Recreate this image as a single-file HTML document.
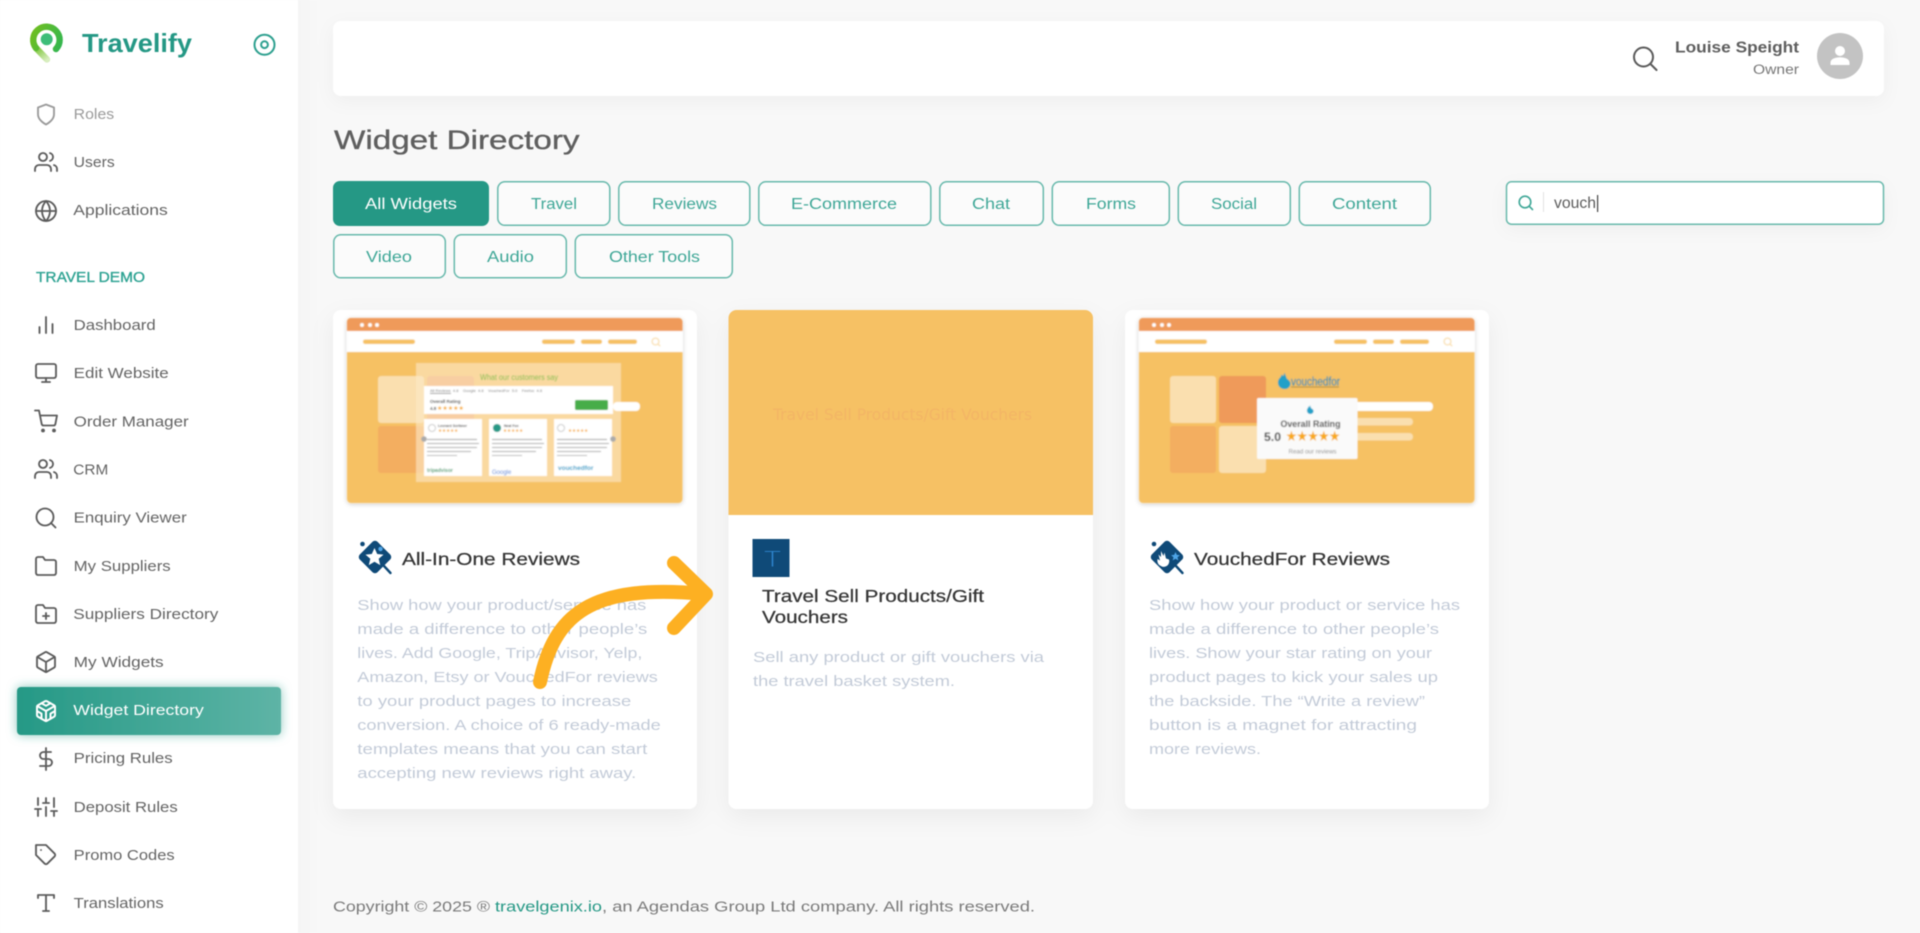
<!DOCTYPE html>
<html lang="en"><head><meta charset="utf-8"><title>Widget Directory</title>
<style>
html,body{margin:0;padding:0;width:1920px;height:933px;overflow:hidden;background:#f8f8f8}
svg{display:block;filter:blur(.45px)}
text{font-family:"Liberation Sans",sans-serif;white-space:pre}
.n{font-size:15px;fill:#646464}
.f{font-size:15.5px;fill:#3fa797;text-anchor:start}
.d{font-size:15px;fill:#c3cbd8}
.h{font-size:17.5px;fill:#353535;stroke:#353535;stroke-width:.25}
.i{fill:none;stroke:#5c5c5c;stroke-width:1.85;stroke-linecap:round;stroke-linejoin:round}
.b{fill:#fbfbfb;stroke:#68b9ac;stroke-width:1.5}
.t{fill:#8a8a8a}
</style></head><body>
<svg width="1920" height="933" viewBox="0 0 1920 933" xmlns="http://www.w3.org/2000/svg">
<defs>
<filter id="card" x="-20%" y="-20%" width="140%" height="140%"><feDropShadow dx="0" dy="8" stdDeviation="12" flood-color="#000" flood-opacity=".055"/></filter>
<filter id="top" x="-5%" y="-50%" width="110%" height="200%"><feDropShadow dx="0" dy="5" stdDeviation="9" flood-color="#000" flood-opacity=".04"/></filter>
<filter id="act" x="-15%" y="-50%" width="130%" height="200%"><feDropShadow dx="0" dy="0" stdDeviation="5" flood-color="#259885" flood-opacity=".55"/></filter>
<filter id="fr" x="-5%" y="-5%" width="110%" height="110%"><feDropShadow dx="0" dy="1" stdDeviation="2.5" flood-color="#000" flood-opacity=".22"/></filter>
<filter id="soft" x="-5%" y="-5%" width="110%" height="110%"><feGaussianBlur stdDeviation=".45"/></filter>
<linearGradient id="ag" x1="0" x2="1" y1="0" y2="0"><stop offset="0" stop-color="#259986"/><stop offset="1" stop-color="#5eb4a6"/></linearGradient>
<linearGradient id="lg" x1="31" x2="62" y1="30" y2="45" gradientUnits="userSpaceOnUse"><stop offset="0" stop-color="#72bf1f"/><stop offset="1" stop-color="#33b64f"/></linearGradient>
<linearGradient id="lt" x1="36" x2="47" y1="46" y2="60" gradientUnits="userSpaceOnUse"><stop offset="0" stop-color="#72c02a"/><stop offset="1" stop-color="#d8eebf"/></linearGradient>
<linearGradient id="sb" x1="0" x2="1" y1="0" y2="0"><stop offset="0" stop-color="#000" stop-opacity=".012"/><stop offset="1" stop-color="#000" stop-opacity="0"/></linearGradient>
<g id="frame">
<g filter="url(#fr)"><rect x="347" y="318" width="335.5" height="185" rx="4" fill="#f6c164"/></g>
<path d="M347 331v-9a4 4 0 0 1 4-4h327.5a4 4 0 0 1 4 4v9z" fill="#ef9a5a"/>
<rect x="347" y="331" width="335.5" height="21" fill="#fff"/>
<circle cx="362" cy="325" r="2" fill="#fff"/><circle cx="370" cy="325" r="2" fill="#fff"/><circle cx="377" cy="325" r="2" fill="#fff"/>
<rect x="363" y="339.5" width="52" height="4.5" rx="2.2" fill="#f6c164"/>
<rect x="542" y="339.5" width="33" height="4.5" rx="2.2" fill="#f6c164"/>
<rect x="581" y="339.5" width="21" height="4.5" rx="2.2" fill="#f6c164"/>
<rect x="608" y="339.5" width="29" height="4.5" rx="2.2" fill="#f6c164"/>
<circle cx="655.5" cy="341.5" r="3.4" fill="none" stroke="#fadfae" stroke-width="1.3"/><path d="M658 344l2.2 2.2" stroke="#fadfae" stroke-width="1.3"/>
</g>
<g id="bd"><rect width="58" height="57" fill="#fff"/>
<rect x="3" y="20" width="50" height="1" fill="#9a9a9a"/><rect x="3" y="24" width="52" height="1" fill="#a5a5a5"/><rect x="3" y="28" width="50" height="1" fill="#a5a5a5"/><rect x="3" y="32" width="44" height="1" fill="#a5a5a5"/><rect x="3" y="36" width="30" height="1" fill="#b5b5b5"/></g>
</defs>

<rect width="1920" height="933" fill="#f8f8f8"/>
<rect x="298" y="0" width="24" height="933" fill="url(#sb)"/>
<rect x="0" y="0" width="298" height="933" fill="#fff"/>

<!-- logo -->
<path d="M36 48L47 59.5" fill="none" stroke="url(#lt)" stroke-width="6.4" stroke-linecap="round"/>
<path d="M56 49A13.2 13.2 0 1 0 36 48" fill="none" stroke="url(#lg)" stroke-width="6.4" stroke-linecap="round"/>
<circle cx="46.7" cy="39.3" r="6" fill="#3dbd78"/>
<text x="82" y="52" font-size="26" font-weight="700" fill="#259885" textLength="110" lengthAdjust="spacingAndGlyphs">Travelify</text>
<circle cx="264.5" cy="44.7" r="10" fill="none" stroke="#2ea08f" stroke-width="2"/><circle cx="264.5" cy="44.7" r="3.4" fill="none" stroke="#2ea08f" stroke-width="2"/>

<!-- sidebar nav text -->
<text class="n" x="73.7" y="119" style="fill:#9a9a9a" textLength="40.5" lengthAdjust="spacingAndGlyphs">Roles</text>
<text class="n" x="73.7" y="167" textLength="41" lengthAdjust="spacingAndGlyphs">Users</text>
<text class="n" x="73.3" y="215" textLength="94.5" lengthAdjust="spacingAndGlyphs">Applications</text>
<text x="36" y="282" font-size="15" fill="#2fa393" stroke="#2fa393" stroke-width=".35" textLength="109" lengthAdjust="spacingAndGlyphs">TRAVEL DEMO</text>
<text class="n" x="73.7" y="330" textLength="82" lengthAdjust="spacingAndGlyphs">Dashboard</text>
<text class="n" x="73.7" y="378" textLength="95" lengthAdjust="spacingAndGlyphs">Edit Website</text>
<text class="n" x="73.7" y="426.5" textLength="115" lengthAdjust="spacingAndGlyphs">Order Manager</text>
<text class="n" x="73.3" y="474.5" textLength="35" lengthAdjust="spacingAndGlyphs">CRM</text>
<text class="n" x="73.7" y="522.5" textLength="113" lengthAdjust="spacingAndGlyphs">Enquiry Viewer</text>
<text class="n" x="73.7" y="571" textLength="97" lengthAdjust="spacingAndGlyphs">My Suppliers</text>
<text class="n" x="73.3" y="619" textLength="145" lengthAdjust="spacingAndGlyphs">Suppliers Directory</text>
<text class="n" x="73.7" y="667" textLength="90" lengthAdjust="spacingAndGlyphs">My Widgets</text>
<g filter="url(#act)"><rect x="17" y="687" width="264" height="48" rx="4" fill="url(#ag)"/></g>
<text class="n" x="73.3" y="715" style="fill:#fff" textLength="130.5" lengthAdjust="spacingAndGlyphs">Widget Directory</text>
<text class="n" x="73.7" y="763" textLength="99" lengthAdjust="spacingAndGlyphs">Pricing Rules</text>
<text class="n" x="73.7" y="812" textLength="104" lengthAdjust="spacingAndGlyphs">Deposit Rules</text>
<text class="n" x="73.7" y="860" textLength="101" lengthAdjust="spacingAndGlyphs">Promo Codes</text>
<text class="n" x="73.7" y="908" textLength="90" lengthAdjust="spacingAndGlyphs">Translations</text>

<!-- sidebar icons -->
<g class="i" transform="translate(34 102.500)" style="stroke:#9a9a9a"><path d="M12 22s8-4 8-10V5l-8-3-8 3v7c0 6 8 10 8 10z"/></g>
<g class="i" transform="translate(34 150)"><path d="M17 21v-2a4 4 0 0 0-4-4H5a4 4 0 0 0-4 4v2"/><circle cx="9" cy="7" r="4"/><path d="M23 21v-2a4 4 0 0 0-3-3.87"/><path d="M16 3.130a4 4 0 0 1 0 7.750"/></g>
<g class="i" transform="translate(34 199)"><circle cx="12" cy="12" r="10"/><path d="M2 12h20"/><path d="M12 2a15.3 15.3 0 0 1 4 10 15.3 15.3 0 0 1-4 10 15.3 15.3 0 0 1-4-10 15.3 15.3 0 0 1 4-10z"/></g>
<g class="i" transform="translate(34 313)"><path d="M18.500 20V11M12 20V4M5.500 20v-6"/></g>
<g class="i" transform="translate(34 361)"><rect x="2" y="3" width="20" height="14" rx="2"/><path d="M8 21h8M12 17v4"/></g>
<g class="i" transform="translate(34 409.500)"><circle cx="9" cy="21" r="1"/><circle cx="20" cy="21" r="1"/><path d="M1 1h4l2.68 13.39a2 2 0 0 0 2 1.61h9.72a2 2 0 0 0 2-1.61L23 6H6"/></g>
<g class="i" transform="translate(34 457)"><path d="M17 21v-2a4 4 0 0 0-4-4H5a4 4 0 0 0-4 4v2"/><circle cx="9" cy="7" r="4"/><path d="M23 21v-2a4 4 0 0 0-3-3.87"/><path d="M16 3.130a4 4 0 0 1 0 7.750"/></g>
<g class="i" transform="translate(34 506)"><circle cx="11" cy="11" r="8.500"/><path d="M21.500 21.500l-4.600-4.600"/></g>
<g class="i" transform="translate(34 554)"><path d="M22 19a2 2 0 0 1-2 2H4a2 2 0 0 1-2-2V5a2 2 0 0 1 2-2h5l2 3h9a2 2 0 0 1 2 2z"/></g>
<g class="i" transform="translate(34 602)"><path d="M22 19a2 2 0 0 1-2 2H4a2 2 0 0 1-2-2V5a2 2 0 0 1 2-2h5l2 3h9a2 2 0 0 1 2 2z"/><path d="M12 11v6M9 14h6"/></g>
<g class="i" transform="translate(34 650)"><path d="M21 16V8a2 2 0 0 0-1-1.730l-7-4a2 2 0 0 0-2 0l-7 4A2 2 0 0 0 3 8v8a2 2 0 0 0 1 1.730l7 4a2 2 0 0 0 2 0l7-4A2 2 0 0 0 21 16z"/><path d="M3.270 6.960L12 12.010l8.730-5.050M12 22.080V12"/></g>
<g class="i" transform="translate(34 699)" style="stroke:#fff;stroke-width:2"><path d="M21 16V8a2 2 0 0 0-1-1.730l-7-4a2 2 0 0 0-2 0l-7 4A2 2 0 0 0 3 8v8a2 2 0 0 0 1 1.730l7 4a2 2 0 0 0 2 0l7-4A2 2 0 0 0 21 16z"/><path d="M7.500 4.210l4.500 2.600 4.500-2.600M7.500 19.790V14.600L3 12M21 12l-4.500 2.600v5.190M3.270 6.960L12 12.010l8.730-5.050M12 22.080V12"/></g>
<g class="i" transform="translate(34 747)"><path d="M12 1v22"/><path d="M17 5H9.500a3.500 3.500 0 0 0 0 7h5a3.500 3.500 0 0 1 0 7H6"/></g>
<g class="i" transform="translate(34 795)"><path d="M4 21v-7M4 10V3M12 21v-9M12 8V3M20 21v-5M20 12V3M1 14h6M9 8h6M17 16h6"/></g>
<g class="i" transform="translate(34 843)"><path d="M20.590 13.410l-7.170 7.170a2 2 0 0 1-2.830 0L2 12V2h10l8.590 8.590a2 2 0 0 1 0 2.820z"/><path d="M7 7h.01"/></g>
<g class="i" transform="translate(34 891)"><path d="M4 7V4h16v3M9 20h6M12 4v16"/></g>

<!-- header -->
<g filter="url(#top)"><rect x="333" y="21" width="1551" height="75" rx="8" fill="#fff"/></g>
<g class="i" transform="translate(1632.500 46)" style="stroke:#5a5a5a;stroke-width:2"><circle cx="11" cy="11" r="9.500"/><path d="M24 24l-6-6"/></g>
<text x="1675" y="52.500" font-size="16" font-weight="700" fill="#5e5e5e" textLength="124" lengthAdjust="spacingAndGlyphs">Louise Speight</text>
<text x="1753" y="74" font-size="13.500" fill="#777" textLength="46" lengthAdjust="spacingAndGlyphs">Owner</text>
<circle cx="1840" cy="56" r="23" fill="#c3c3c3"/>
<circle cx="1840" cy="51" r="5" fill="#fff"/><path d="M1830.500 65v-2.500c0-3.500 5-5.200 9.500-5.200s9.500 1.700 9.500 5.200v2.500z" fill="#fff"/>

<!-- title -->
<text x="334" y="149" font-size="27" fill="#5f5f5f" stroke="#5f5f5f" stroke-width=".35" textLength="245.500" lengthAdjust="spacingAndGlyphs">Widget Directory</text>

<!-- filters -->
<rect x="333" y="181" width="156" height="45" rx="7" fill="#259885"/>
<rect class="b" x="497.800" y="181.800" width="112" height="43.500" rx="7"/>
<rect class="b" x="618.800" y="181.800" width="131" height="43.500" rx="7"/>
<rect class="b" x="758.800" y="181.800" width="172" height="43.500" rx="7"/>
<rect class="b" x="939.800" y="181.800" width="103.500" height="43.500" rx="7"/>
<rect class="b" x="1052.300" y="181.800" width="117" height="43.500" rx="7"/>
<rect class="b" x="1178.300" y="181.800" width="112" height="43.500" rx="7"/>
<rect class="b" x="1299.300" y="181.800" width="131" height="43.500" rx="7"/>
<rect class="b" x="333.800" y="234.800" width="111.500" height="43" rx="7"/>
<rect class="b" x="454.300" y="234.800" width="112" height="43" rx="7"/>
<rect class="b" x="575.300" y="234.800" width="157" height="43" rx="7"/>
<text class="f" x="365" y="209" style="fill:#fff" textLength="92" lengthAdjust="spacingAndGlyphs">All Widgets</text>
<text class="f" x="531" y="209" textLength="46" lengthAdjust="spacingAndGlyphs">Travel</text>
<text class="f" x="652" y="209" textLength="65" lengthAdjust="spacingAndGlyphs">Reviews</text>
<text class="f" x="791" y="209" textLength="106" lengthAdjust="spacingAndGlyphs">E-Commerce</text>
<text class="f" x="972" y="209" textLength="38" lengthAdjust="spacingAndGlyphs">Chat</text>
<text class="f" x="1086" y="209" textLength="50" lengthAdjust="spacingAndGlyphs">Forms</text>
<text class="f" x="1211" y="209" textLength="46" lengthAdjust="spacingAndGlyphs">Social</text>
<text class="f" x="1332" y="209" textLength="65" lengthAdjust="spacingAndGlyphs">Content</text>
<text class="f" x="366" y="262" textLength="46" lengthAdjust="spacingAndGlyphs">Video</text>
<text class="f" x="487" y="262" textLength="47" lengthAdjust="spacingAndGlyphs">Audio</text>
<text class="f" x="609" y="262" textLength="91" lengthAdjust="spacingAndGlyphs">Other Tools</text>

<!-- search box -->
<g filter="url(#top)"><rect x="1506" y="182" width="378" height="42" rx="5" fill="#fff"/></g>
<rect x="1506.500" y="181.800" width="377" height="42.400" rx="5" fill="#fff" stroke="#69b9ac" stroke-width="1.500"/>
<circle cx="1525" cy="202" r="5.800" fill="none" stroke="#3fa797" stroke-width="1.600"/><path d="M1529.200 206.200l3.300 3.300" stroke="#3fa797" stroke-width="1.600" stroke-linecap="round"/>
<rect x="1543" y="192" width="1" height="20" fill="#e2e2e2"/>
<text x="1554" y="208" font-size="16" fill="#5c5c5c" textLength="42" lengthAdjust="spacingAndGlyphs">vouch</text>
<rect x="1597" y="195" width="1.200" height="17" fill="#444"/>

<!-- cards -->
<g filter="url(#card)"><rect x="333" y="310" width="364" height="499" rx="8" fill="#fff"/>
<rect x="728.500" y="310" width="364.500" height="499" rx="8" fill="#fff"/>
<rect x="1125" y="310" width="364" height="499" rx="8" fill="#fff"/></g>

<!-- card 1 mock -->
<g filter="url(#soft)">
<use href="#frame"/>
<rect x="378" y="376" width="46" height="47" rx="3" fill="#fadfaf"/>
<rect x="378" y="426" width="46" height="47" rx="3" fill="#f3ae60"/>
<rect x="427" y="376" width="47" height="47" rx="3" fill="#f2a367"/>
<rect x="416" y="363" width="205" height="119" fill="#fce9c6" fill-opacity=".62"/>
<text x="480" y="380" font-size="8" fill="#7cbd48" textLength="78" lengthAdjust="spacingAndGlyphs">What our customers say</text>
<rect x="424" y="386" width="189" height="28" fill="#fff"/>
<rect x="613" y="402" width="27" height="9" rx="4" fill="#fff"/>
<text x="430" y="392" font-size="4" fill="#777">All Reviews  4.8    Google  4.8    VouchedFor  5.0    Feefoo  4.8</text>
<rect x="430" y="393" width="21" height=".8" fill="#777"/>
<text x="430" y="403" font-size="4.500" font-weight="700" fill="#444">Overall Rating</text>
<text x="430" y="410" font-size="4.500" font-weight="700" fill="#444">4.8</text>
<text x="437" y="410" font-size="6" fill="#f8a81e" style="font-family:'DejaVu Sans',sans-serif">★★★★★</text>
<rect x="575" y="400" width="33" height="10" rx="1.500" fill="#47ad4a"/>
<use href="#bd" x="424" y="419"/>
<use href="#bd" x="489" y="419"/>
<use href="#bd" x="554" y="419"/>
<circle cx="432" cy="428" r="3.500" fill="none" stroke="#ccc"/><circle cx="497" cy="428" r="4" fill="#259885"/><circle cx="561" cy="428" r="3.500" fill="none" stroke="#ccc"/>
<text x="438" y="427" font-size="3.500" font-weight="700" fill="#555">Leonard Scribner</text><text x="504" y="427" font-size="3.500" font-weight="700" fill="#555">Neal Fox</text>
<text x="438" y="432" font-size="4.500" fill="#f8a81e" style="font-family:'DejaVu Sans',sans-serif">★★★★★</text><text x="503" y="432" font-size="4.500" fill="#f8a81e" style="font-family:'DejaVu Sans',sans-serif">★★★★★</text><text x="568" y="432" font-size="4.500" fill="#f8a81e" style="font-family:'DejaVu Sans',sans-serif">★★★★★</text>
<text x="427" y="472" font-size="5" fill="#4a9e70" font-weight="700">tripadvisor</text>
<text x="492" y="474" font-size="6" fill="#4b7fd8">Google</text>
<text x="558" y="470" font-size="6.500" fill="#2a9fc9" font-weight="700">vouchedfor</text>
<circle cx="424" cy="439" r="2.800" fill="#aaa"/><circle cx="613" cy="439" r="2.800" fill="#aaa"/>
</g>
<!-- card 2 image -->
<path d="M728.500 515V318a8 8 0 0 1 8-8H1085a8 8 0 0 1 8 8v197z" fill="#f6c164"/>
<text x="773" y="420" font-size="16" fill="#f3b565" style="font-family:'DejaVu Sans',sans-serif" textLength="259" lengthAdjust="spacingAndGlyphs">Travel Sell Products/Gift Vouchers</text>

<!-- card 3 mock -->
<g filter="url(#soft)">
<use href="#frame" x="792"/>
<rect x="1170" y="376" width="46" height="47" rx="3" fill="#fadfaf"/>
<rect x="1219" y="376" width="47" height="47" rx="3" fill="#ef9a5a"/>
<rect x="1170" y="426" width="46" height="47" rx="3" fill="#f3ae60"/>
<rect x="1219" y="426" width="47" height="47" rx="3" fill="#fadfaf"/>
<rect x="1340" y="402" width="93" height="9" rx="4" fill="#fff"/>
<rect x="1340" y="418" width="73" height="7.500" rx="3.500" fill="#fadfaf"/>
<rect x="1340" y="433" width="73" height="7.500" rx="3.500" fill="#fadfaf"/>
<path d="M1285 389c-4.500 0-7-3-7-6.500 0-4.500 3.500-4.500 3.500-8 1 1 2 1.500 2 1.500 0-1 1-2.500 1-3.500 1 2.500 1.500 4.500 2.500 6.500 2 1 3.500 3 3.500 4.500 0 3-2.500 5.500-5.500 5.500z" fill="#22a0c8"/>
<text x="1291" y="385.500" font-size="11.500" fill="#2a8fb5" stroke="#2a8fb5" stroke-width=".2" textLength="49" lengthAdjust="spacingAndGlyphs">vouchedfor</text>
<rect x="1291" y="386.500" width="48" height="1" fill="#7d6a30" opacity=".6"/>
<rect x="1257" y="398" width="100.500" height="61" rx="1.500" fill="#fafafa"/>
<path d="M1310.500 414c-2 0-3.500-1.500-3.500-3.500 0-2 1.500-2.200 1.500-4.200l1 .8.500-2 1 3.200c1.500.8 2.500 1.500 2.500 2.700 0 1.800-1.500 3-3 3z" fill="#22a0c8"/>
<text x="1280.500" y="427" font-size="9" font-weight="700" fill="#444" textLength="60" lengthAdjust="spacingAndGlyphs">Overall Rating</text>
<text x="1264" y="441" font-size="11.500" font-weight="700" fill="#444" textLength="17" lengthAdjust="spacingAndGlyphs">5.0</text>
<text x="1286" y="440.500" font-size="13" fill="#f8a81e" stroke="#f8a81e" stroke-width=".3" style="font-family:'DejaVu Sans',sans-serif" textLength="54" lengthAdjust="spacingAndGlyphs">★★★★★</text>
<text x="1288.500" y="453.500" font-size="6.500" fill="#8d8d8d" textLength="48" lengthAdjust="spacingAndGlyphs">Read our reviews</text>
</g>

<!-- card 1 content -->
<g>
<rect x="362.500" y="544.500" width="25" height="25" rx="3.500" transform="rotate(45 375 557)" fill="#0f4a78"/>
<circle cx="362.500" cy="544" r="2.300" fill="#0f4a78"/>
<path d="M384 566l6.500 7" stroke="#0f4a78" stroke-width="2.400" stroke-linecap="round"/>
<path d="M374.500 548l2.700 6 6.300.6-4.800 4.200 1.500 6.300-5.700-3.400-5.700 3.400 1.500-6.300-4.800-4.200 6.300-.6z" fill="#fff"/>
<circle cx="380.500" cy="549" r="2.200" fill="#4fa6e8"/>
</g>
<text class="h" x="402" y="565" textLength="178" lengthAdjust="spacingAndGlyphs">All-In-One Reviews</text>
<text class="d" x="357.300" y="610" textLength="289" lengthAdjust="spacingAndGlyphs">Show how your product/service has</text>
<text class="d" x="357.300" y="634" textLength="290" lengthAdjust="spacingAndGlyphs">made a difference to other people’s</text>
<text class="d" x="357.300" y="658" textLength="285" lengthAdjust="spacingAndGlyphs">lives. Add Google, TripAdvisor, Yelp,</text>
<text class="d" x="357.300" y="682" textLength="300.500" lengthAdjust="spacingAndGlyphs">Amazon, Etsy or VouchedFor reviews</text>
<text class="d" x="357.300" y="706" textLength="274" lengthAdjust="spacingAndGlyphs">to your product pages to increase</text>
<text class="d" x="357.300" y="730" textLength="303.500" lengthAdjust="spacingAndGlyphs">conversion. A choice of 6 ready-made</text>
<text class="d" x="357.300" y="754" textLength="290" lengthAdjust="spacingAndGlyphs">templates means that you can start</text>
<text class="d" x="357.300" y="778" textLength="279" lengthAdjust="spacingAndGlyphs">accepting new reviews right away.</text>

<!-- card 2 content -->
<rect x="752.500" y="539" width="37" height="38" fill="#0f4a78"/>
<text x="763.500" y="567" font-size="24" fill="#2f86cf" stroke="#0f4a78" stroke-width="1" textLength="18" lengthAdjust="spacingAndGlyphs">T</text>
<text class="h" x="762" y="602" textLength="222" lengthAdjust="spacingAndGlyphs">Travel Sell Products/Gift</text>
<text class="h" x="762" y="623" textLength="86" lengthAdjust="spacingAndGlyphs">Vouchers</text>
<text class="d" x="753" y="662" textLength="291" lengthAdjust="spacingAndGlyphs">Sell any product or gift vouchers via</text>
<text class="d" x="753" y="686" textLength="202" lengthAdjust="spacingAndGlyphs">the travel basket system.</text>

<!-- card 3 content -->
<g>
<rect x="1154.500" y="544.500" width="25" height="25" rx="3.500" transform="rotate(45 1167 557)" fill="#0f4a78"/>
<circle cx="1154" cy="544" r="2.300" fill="#0f4a78"/>
<path d="M1176 566l6.500 7" stroke="#0f4a78" stroke-width="2.400" stroke-linecap="round"/>
<path d="M1161 566c-3-1-4-4-3.500-7l2.500 1.500-1.500-6 2.500 2.500 0-6 2.500 5 1-3.500 1.500 6 3 1c1 3-1 6.500-3.500 7-1.500.5-3.500.5-4.500-.5z" fill="#fff"/>
<path d="M1175.500 552l1.300 2.900 3.100.3-2.400 2.100.8 3.100-2.800-1.700-2.800 1.700.8-3.100-2.400-2.100 3.100-.3z" fill="#4fa6e8"/>
</g>
<text class="h" x="1194" y="565" textLength="196" lengthAdjust="spacingAndGlyphs">VouchedFor Reviews</text>
<text class="d" x="1149" y="610" textLength="311" lengthAdjust="spacingAndGlyphs">Show how your product or service has</text>
<text class="d" x="1149" y="634" textLength="290" lengthAdjust="spacingAndGlyphs">made a difference to other people’s</text>
<text class="d" x="1149" y="658" textLength="283" lengthAdjust="spacingAndGlyphs">lives. Show your star rating on your</text>
<text class="d" x="1149" y="682" textLength="289" lengthAdjust="spacingAndGlyphs">product pages to kick your sales up</text>
<text class="d" x="1149" y="706" textLength="276" lengthAdjust="spacingAndGlyphs">the backside. The “Write a review”</text>
<text class="d" x="1149" y="730" textLength="268" lengthAdjust="spacingAndGlyphs">button is a magnet for attracting</text>
<text class="d" x="1149" y="754" textLength="112" lengthAdjust="spacingAndGlyphs">more reviews.</text>

<!-- footer -->
<text x="333" y="911.500" font-size="15" fill="#7a7a7a" textLength="157" lengthAdjust="spacingAndGlyphs">Copyright © 2025 ®</text>
<text x="495" y="911.500" font-size="15" fill="#259885" textLength="107" lengthAdjust="spacingAndGlyphs">travelgenix.io</text>
<text x="602" y="911.500" font-size="15" fill="#7a7a7a" textLength="433" lengthAdjust="spacingAndGlyphs">, an Agendas Group Ltd company. All rights reserved.</text>

<!-- arrow -->
<g fill="none" stroke="#fdb022" stroke-width="14" stroke-linecap="round" stroke-linejoin="round">
<path d="M540 682C554 615 590 583 704 594"/>
<path d="M674 563L706 594L674 628"/>
</g>
</svg>
</body></html>
